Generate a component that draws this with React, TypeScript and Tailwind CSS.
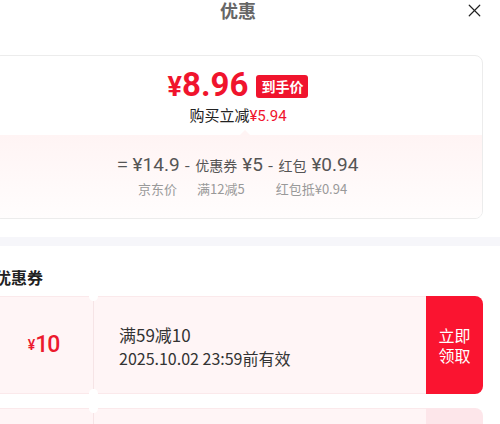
import React from 'react';
import { X } from 'lucide-react';

const cjk = { fontFamily: '"Noto Sans CJK SC", "Noto Sans", sans-serif' };
const num = { fontFamily: 'Roboto, "Noto Sans CJK SC", sans-serif' };

const Coupon: React.FC<{ amount: string; title: string; expire: string; faded?: boolean }> = ({ amount, title, expire, faded }) => (
  <div className="flex h-[98px]">
    <div className="relative flex flex-1 rounded-l-lg border border-r-0 border-[#fbe9eb] bg-[#fff5f6]">
      <div className="flex w-[99px] items-center justify-center text-[#ec1a2e]">
        <span style={num} className="text-[14px] font-medium">¥</span>
        <span style={num} className="text-[23px] font-medium tracking-[-1px]">{amount}</span>
      </div>
      <div className="relative w-px bg-[#f6e4e6]">
        <div className="absolute -top-[5px] -left-[4px] h-[9px] w-[9px] rounded-full bg-white" />
        <div className="absolute -bottom-[5px] -left-[4px] h-[9px] w-[9px] rounded-full bg-white" />
      </div>
      <div className="flex flex-col justify-center pl-[25px] text-[#333]">
        <div className="text-[17px] leading-[25px]">{title}</div>
        <div className="text-[16px] leading-[22px]">{expire}</div>
      </div>
    </div>
    <div className={`flex w-[57px] flex-col items-center justify-center rounded-r-lg text-[16px] leading-[20px] text-white ${faded ? 'bg-[#fde6ea]' : 'bg-[#fa1430]'}`}>
      <span>立即</span>
      <span>领取</span>
    </div>
  </div>
);

export default function App() {
  return (
    <div style={cjk} className="h-[424px] w-[500px] overflow-hidden bg-white">
      <div className="ml-[-17px] w-[524px]">
        <div className="relative h-[55px] pl-[10px] pr-[24px]">
          <div className="flex h-[20px] items-center justify-center text-[18px] font-bold text-[#666]">优惠</div>
          <X className="absolute right-[22px] top-0 text-[#222]" size={21} strokeWidth={1.4} />
        </div>

        <div className="pl-[10px] pr-[24px]">
          <div className="overflow-hidden rounded-lg border border-[#ececec]">
            <div className="flex h-[79px] flex-col items-center pt-[14px]">
              <div className="flex items-center">
                <div className="flex items-baseline text-[#f0142d]" style={num}>
                  <span className="text-[27px] font-bold leading-[30px]">¥</span>
                  <span className="text-[33px] font-bold leading-[30px]">8.96</span>
                </div>
                <span className="ml-[8px] rounded-[3px] bg-[#f0142d] px-[5px] py-[1px] text-[14px] font-bold leading-[21px] text-white">到手价</span>
              </div>
              <div className="mt-[3px] text-[15px] leading-[20px] text-[#222]">
                购买立减<span style={num} className="text-[#f0142d]">¥5.94</span>
              </div>
            </div>
            <div className="relative h-[83px] bg-gradient-to-b from-[#fff4f4] to-[#fffdfd] pt-[15px]">
              <div className="absolute -top-[5px] left-[245px] h-0 w-0 border-x-[6px] border-b-[6px] border-x-transparent border-b-[#fff4f4]" />
              <div className="flex items-center justify-center text-[#555]">
                <div className="flex items-baseline gap-[5px]">
                  <span className="text-[18px]">=</span>
                  <span style={num} className="text-[19px] leading-[24px]">¥14.9</span>
                  <span className="text-[16px]">-</span>
                  <span className="text-[14px]">优惠券</span>
                  <span style={num} className="text-[19px] leading-[24px]">¥5</span>
                  <span className="text-[16px]">-</span>
                  <span className="text-[14px]">红包</span>
                  <span style={num} className="text-[19px] leading-[24px]">¥0.94</span>
                </div>
              </div>
              <div className="mt-[4px] flex text-[13px] leading-[16px] text-[#999]">
                <span className="ml-[144px]">京东价</span>
                <span className="ml-[20px]">满12减5</span>
                <span className="ml-[31px]">红包抵¥0.94</span>
              </div>
            </div>
          </div>
        </div>

        <div className="mt-[18px] h-[9px] bg-[#f6f6fa]" />

        <div className="pl-[12px] pr-[24px] pt-[21px] text-[16px] font-bold leading-[20px] text-[#222]">优惠券</div>

        <div className="flex flex-col gap-[14px] pl-[10px] pr-[24px] pt-[9px]">
          <Coupon amount="10" title="满59减10" expire="2025.10.02 23:59前有效" />
          <Coupon amount="5" title="满29减5" expire="2025.10.02 23:59前有效" faded />
        </div>
      </div>
    </div>
  );
}
